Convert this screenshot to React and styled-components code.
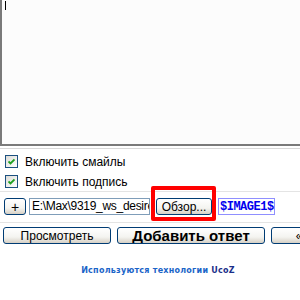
import styled, { createGlobalStyle } from "styled-components";

const Global = createGlobalStyle`
  html, body {
    margin: 0;
    padding: 0;
    background: #ffffff;
    overflow: hidden;
  }
  body {
    font-family: "Liberation Sans", Arial, sans-serif;
  }
`;

function Check() {
  return (
    <svg width="7" height="7" viewBox="0 0 7 7">
      <path d="M0.5 3.5 L2.5 5.5 L6.5 1.5" stroke="#21a121" strokeWidth="1.8" fill="none" />
    </svg>
  );
}

export default function App() {
  return (
    <Page>
      <Global />
      <Editor>
        <Caret />
      </Editor>
      <Rule $color="#d8d8d8" />
      <Options>
        <Option>
          <Box>
            <Check />
          </Box>
          Включить смайлы
        </Option>
        <Option>
          <Box>
            <Check />
          </Box>
          Включить подпись
        </Option>
      </Options>
      <Rule $color="#e4e4e4" />
      <Attach>
        <SmallButton>+</SmallButton>
        <FileField>E:\Max\9319_ws_desire</FileField>
        <Marked>
          <BrowseButton>Обзор...</BrowseButton>
        </Marked>
        <Tag>$IMAGE1$</Tag>
      </Attach>
      <Rule $color="#e4e4e4" />
      <Actions>
        <Button $width="108px">Просмотреть</Button>
        <Button $width="148px" $bold>
          Добавить ответ
        </Button>
        <Button $width="56px">«</Button>
      </Actions>
      <Footer>
        Используются технологии <b>UcoZ</b>
      </Footer>
    </Page>
  );
}

const Page = styled.div`
  width: 300px;
  height: 300px;
  display: flex;
  flex-direction: column;
  overflow: hidden;
`;

const Editor = styled.div`
  height: 143px;
  background: #fcfcfc;
  border-left: 2px solid #7a7a7a;
  border-bottom: 2px solid #7a7a7a;
  padding: 1px 0 0 3px;
`;

const Caret = styled.div`
  width: 1px;
  height: 9px;
  background: #000;
`;

const Rule = styled.div`
  flex: none;
  height: 1px;
  margin-top: 2px;
  background: ${(p) => p.$color};
`;

const Options = styled.div`
  display: flex;
  flex-direction: column;
  gap: 7px;
  padding: 6px 0 1px 5px;
`;

const Option = styled.label`
  display: flex;
  align-items: center;
  gap: 7px;
  height: 13px;
  font-size: 12px;
  color: #000;
`;

const Box = styled.span`
  width: 11px;
  height: 11px;
  border: 1px solid #1c5180;
  background: linear-gradient(135deg, #dcdcd7, #ffffff);
  display: flex;
  align-items: center;
  justify-content: center;
`;

const Attach = styled.div`
  flex: none;
  display: flex;
  align-items: center;
  padding: 6px 0 5px 4px;
  height: 17px;
`;

const xpButton = `
  border: 1px solid #003c74;
  border-radius: 3px;
  background: linear-gradient(#ffffff, #f4f4f0 60%, #d6d0c5);
  color: #000;
  display: flex;
  align-items: center;
  justify-content: center;
  box-sizing: border-box;
  white-space: nowrap;
  overflow: hidden;
`;

const SmallButton = styled.div`
  ${xpButton}
  width: 22px;
  height: 17px;
  font-size: 14px;
`;

const FileField = styled.div`
  margin-left: 3px;
  width: 121px;
  height: 17px;
  box-sizing: border-box;
  border: 1px solid #7f9db9;
  background: #fff;
  font-size: 12px;
  letter-spacing: -0.3px;
  line-height: 15px;
  padding-left: 2px;
  white-space: nowrap;
  overflow: hidden;
`;

const Marked = styled.div`
  border: 4px solid #f00;
  border-radius: 2px;
  margin: -12px 0 -6px 1px;
  padding: 8px 0 2px 1px;
`;

const BrowseButton = styled.div`
  ${xpButton}
  width: 56px;
  height: 17px;
  font-size: 12px;
`;

const Tag = styled.div`
  margin-left: 2px;
  width: 57px;
  height: 17px;
  box-sizing: border-box;
  border: 1px solid #8f8fff;
  color: #0000ee;
  font-family: "Liberation Mono", "Courier New", monospace;
  font-weight: bold;
  font-size: 12px;
  letter-spacing: -0.5px;
  display: flex;
  align-items: center;
  padding-left: 1px;
  white-space: nowrap;
  overflow: hidden;
`;

const Actions = styled.div`
  flex: none;
  display: flex;
  gap: 6px;
  padding: 4px 0 0 3px;
`;

const Button = styled.div`
  ${xpButton}
  flex: none;
  width: ${(p) => p.$width};
  height: 17px;
  font-size: ${(p) => (p.$bold ? "15px" : "12px")};
  font-weight: ${(p) => (p.$bold ? "bold" : "normal")};
`;

const Footer = styled.div`
  margin-top: 22px;
  padding-left: 16px;
  text-align: center;
  font-family: "DejaVu Sans", Verdana, sans-serif;
  font-size: 8px;
  font-weight: bold;
  letter-spacing: 0.25px;
  color: #1a64c8;
  b {
    color: #1a2f8a;
  }
`;
